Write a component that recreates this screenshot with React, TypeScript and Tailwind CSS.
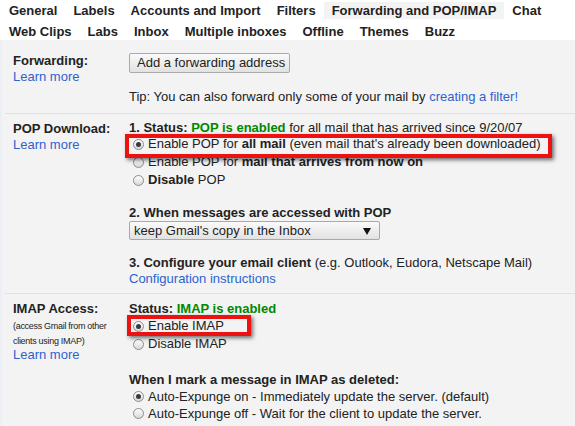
const font = { fontFamily: '"Liberation Sans", Arial, sans-serif' }

function Radio({ checked = false }: { checked?: boolean }) {
  return (
    <span className="ml-[4px] mr-[4px] flex h-[11px] w-[11px] shrink-0 items-center justify-center rounded-full border border-[#8d8d8d] bg-gradient-to-b from-[#ffffff] to-[#d8d8d8]">
      {checked && <span className="h-[5px] w-[5px] rounded-full bg-[#3a3a3a]" />}
    </span>
  )
}

function RedBox({ className }: { className: string }) {
  return (
    <div
      className={`pointer-events-none absolute z-10 border-[4px] border-[#ec1212] shadow-[2px_2px_4px_rgba(0,0,0,0.55)] ${className}`}
    />
  )
}

const tabsTop = ['General', 'Labels', 'Accounts and Import', 'Filters', 'Forwarding and POP/IMAP', 'Chat']
const tabsBottom = ['Web Clips', 'Labs', 'Inbox', 'Multiple inboxes', 'Offline', 'Themes', 'Buzz']

export default function App() {
  return (
    <div style={font} className="h-[426px] w-[575px] overflow-hidden bg-white text-[13px] text-[#222]">
      {/* Tabs */}
      <div className="flex flex-col gap-[4px] pl-[1px] pt-[2px]">
        <div className="flex">
          {tabsTop.map((t) => (
            <span
              key={t}
              className={`px-[8px] text-[13px] font-bold leading-[17px] ${t === 'Forwarding and POP/IMAP' ? 'bg-[#f3f3f3]' : ''}`}
            >
              {t}
            </span>
          ))}
        </div>
        <div className="flex">
          {tabsBottom.map((t) => (
            <span key={t} className="px-[8px] text-[13px] font-bold leading-[17px]">
              {t}
            </span>
          ))}
        </div>
      </div>

      <div className="mt-[0px] h-full border-l-[2px] border-[#eceff6] bg-[#f3f3f3] pt-[13px]">
        {/* Forwarding */}
        <div className="flex pb-[8px] leading-[16px]">
          <div className="w-[127px] shrink-0 pl-[11px]">
            <div className="font-bold">Forwarding:</div>
            <div className="text-[#2d62d0]">Learn more</div>
          </div>
          <div>
            <div className="flex h-[20px] w-[161px] items-center rounded-[2px] border border-[#a9a9a9] bg-gradient-to-b from-[#fafafa] to-[#e2e2e2] pl-[7px]">
              Add a forwarding address
            </div>
            <div className="mt-[16px]">
              Tip: You can also forward only some of your mail by{' '}
              <span className="text-[#2d62d0]">creating a filter!</span>
            </div>
          </div>
        </div>

        {/* POP Download */}
        <div className="ml-[3px] flex border-t border-[#e1e1e1] pb-[6px] pt-[7px] leading-[16px]">
          <div className="w-[124px] shrink-0 pl-[8px]">
            <div className="font-bold">POP Download:</div>
            <div className="text-[#2d62d0]">Learn more</div>
          </div>
          <div>
            <div className="leading-[14px]">
              <b>1. Status:</b> <b className="text-[#008800]">POP is enabled</b> for all mail that has arrived since 9/20/07
            </div>
            <div className="relative flex h-[18px] items-center">
              <RedBox className="-left-[4px] -top-[1px] h-[24px] w-[427px]" />
              <Radio checked />
              <span>
                Enable POP for <b>all mail</b> (even mail that's already been downloaded)
              </span>
            </div>
            <div className="flex h-[18px] items-center">
              <Radio />
              <span>
                Enable POP for <b>mail that arrives from now on</b>
              </span>
            </div>
            <div className="flex h-[18px] items-center">
              <Radio />
              <span>
                <b>Disable</b> POP
              </span>
            </div>

            <div className="mt-[16px] font-bold">2. When messages are accessed with POP</div>
            <div className="relative flex h-[19px] w-[251px] items-center rounded-[2px] border border-[#a9a9a9] bg-gradient-to-b from-[#fafafa] to-[#e2e2e2] pl-[4px]">
              keep Gmail's copy in the Inbox
              <svg className="absolute right-[8px] top-[6px]" width="8" height="7" viewBox="0 0 8 7">
                <path d="M0 0h8L4 7z" fill="#111" />
              </svg>
            </div>

            <div className="mt-[15px]">
              <b>3. Configure your email client</b> (e.g. Outlook, Eudora, Netscape Mail)
            </div>
            <div className="text-[#2d62d0]">Configuration instructions</div>
          </div>
        </div>

        {/* IMAP Access */}
        <div className="ml-[3px] flex border-t border-[#e1e1e1] pt-[7px] leading-[16px]">
          <div className="w-[124px] shrink-0 pl-[8px]">
            <div className="font-bold">IMAP Access:</div>
            <div className="pt-[2px] text-[9px] leading-[15px] tracking-[-0.3px]">
              (access Gmail from other
              <br />
              clients using IMAP)
            </div>
            <div className="-mt-[2px] leading-[15px] text-[#2d62d0]">Learn more</div>
          </div>
          <div>
            <div>
              <b>Status:</b> <b className="text-[#008800]">IMAP is enabled</b>
            </div>
            <div className="relative flex h-[18px] items-center">
              <RedBox className="-left-[2px] -top-[2px] h-[21px] w-[124px]" />
              <Radio checked />
              <span>Enable IMAP</span>
            </div>
            <div className="flex h-[18px] items-center">
              <Radio />
              <span>Disable IMAP</span>
            </div>

            <div className="mt-[19px] font-bold">When I mark a message in IMAP as deleted:</div>
            <div className="flex h-[17px] items-center">
              <Radio checked />
              <span>Auto-Expunge on - Immediately update the server. (default)</span>
            </div>
            <div className="flex h-[17px] items-center">
              <Radio />
              <span>Auto-Expunge off - Wait for the client to update the server.</span>
            </div>
          </div>
        </div>
      </div>
    </div>
  )
}
